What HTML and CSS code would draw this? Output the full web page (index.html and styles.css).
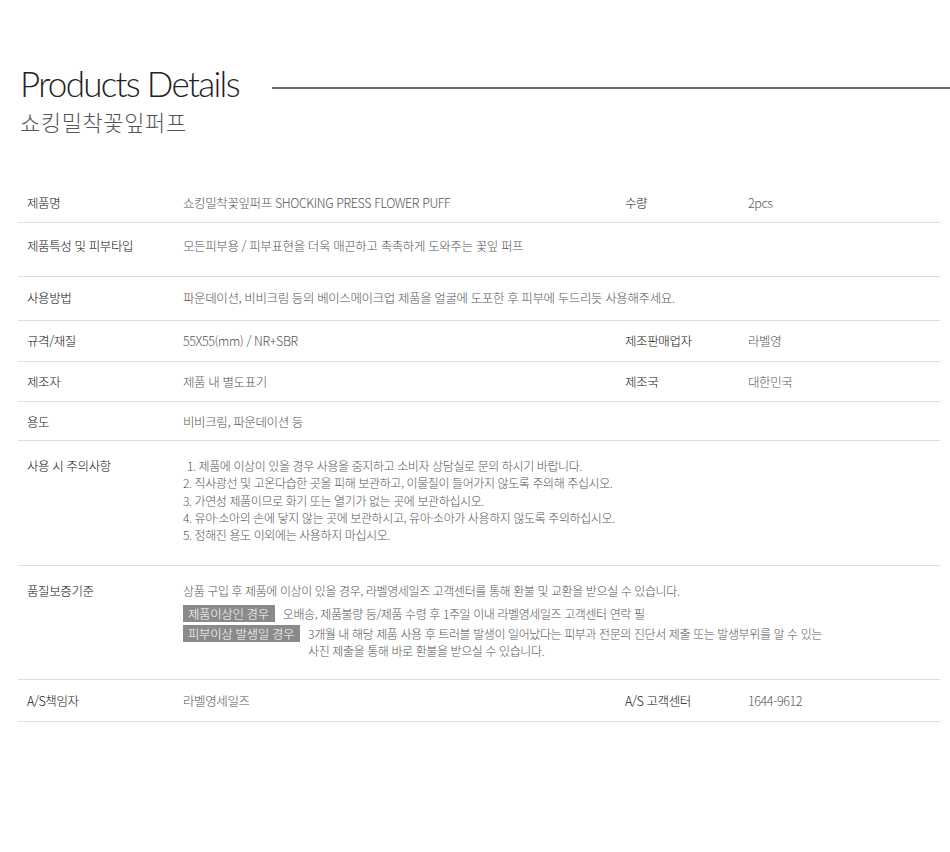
FILE: index.html
```html
<!DOCTYPE html>
<html lang="ko">
<head>
<meta charset="utf-8">
<link rel="stylesheet" href="styles.css">
</head>
<body>
<div class="page">
  <header class="head">
    <div class="head-top">
      <h1 class="title">Products Details</h1>
      <div class="rule"></div>
    </div>
    <p class="subtitle">쇼킹밀착꽃잎퍼프</p>
  </header>
  <table class="info">
    <colgroup>
      <col class="c1"><col class="c2"><col class="c3"><col class="c4">
    </colgroup>
    <tr class="r1">
      <th>제품명</th><td>쇼킹밀착꽃잎퍼프 SHOCKING PRESS FLOWER PUFF</td>
      <th>수량</th><td>2pcs</td>
    </tr>
    <tr class="r2">
      <th>제품특성 및 피부타입</th><td colspan="3">모든피부용 / 피부표현을 더욱 매끈하고 촉촉하게 도와주는 꽃잎 퍼프</td>
    </tr>
    <tr class="r3">
      <th>사용방법</th><td colspan="3">파운데이션, 비비크림 등의 베이스메이크업 제품을 얼굴에 도포한 후 피부에 두드리듯 사용해주세요.</td>
    </tr>
    <tr class="r4">
      <th>규격/재질</th><td>55X55(mm) / NR+SBR</td>
      <th>제조판매업자</th><td>라벨영</td>
    </tr>
    <tr class="r5">
      <th>제조자</th><td>제품 내 별도표기</td>
      <th>제조국</th><td>대한민국</td>
    </tr>
    <tr class="r6">
      <th>용도</th><td colspan="3">비비크림, 파운데이션 등</td>
    </tr>
    <tr class="r7">
      <th>사용 시 주의사항</th>
      <td colspan="3">
        <ol class="notes">
          <li class="first">1. 제품에 이상이 있을 경우 사용을 중지하고 소비자 상담실로 문의 하시기 바랍니다.</li>
          <li>2. 직사광선 및 고온다습한 곳을 피해 보관하고, 이물질이 들어가지 않도록 주의해 주십시오.</li>
          <li>3. 가연성 제품이므로 화기 또는 열기가 없는 곳에 보관하십시오.</li>
          <li>4. 유아·소아의 손에 닿지 않는 곳에 보관하시고, 유아·소아가 사용하지 않도록 주의하십시오.</li>
          <li>5. 정해진 용도 이외에는 사용하지 마십시오.</li>
        </ol>
      </td>
    </tr>
    <tr class="r8">
      <th>품질보증기준</th>
      <td colspan="3">
        <p class="qline">상품 구입 후 제품에 이상이 있을 경우, 라벨영세일즈 고객센터를 통해 환불 및 교환을 받으실 수 있습니다.</p>
        <div class="case">
          <span class="badge">제품이상인 경우</span>
          <span class="case-text">오배송, 제품불량 등/제품 수령 후 1주일 이내 라벨영세일즈 고객센터 연락 필</span>
        </div>
        <div class="case">
          <span class="badge">피부이상 발생일 경우</span>
          <span class="case-text">3개월 내 해당 제품 사용 후 트러블 발생이 일어났다는 피부과 전문의 진단서 제출 또는 발생부위를 알 수 있는<br>사진 제출을 통해 바로 환불을 받으실 수 있습니다.</span>
        </div>
      </td>
    </tr>
    <tr class="r9">
      <th>A/S책임자</th><td>라벨영세일즈</td>
      <th>A/S 고객센터</th><td>1644-9612</td>
    </tr>
  </table>
</div>
</body>
</html>
```
FILE: styles.css
```css
html, body {
  margin: 0;
  padding: 0;
  background: #fff;
}
body {
  font-family: "Noto Sans CJK KR", "Noto Sans", sans-serif;
  color: #333;
}
.page {
  padding: 63px 0 0 18px;
}
.head-top {
  display: flex;
  align-items: center;
}
.title {
  margin: 0 0 0 2px;
  font-family: "Lato", "Open Sans", sans-serif;
  font-weight: 300;
  font-size: 35px;
  line-height: 40px;
  letter-spacing: -1.7px;
  color: #222;
}
.rule {
  flex: 1;
  height: 2px;
  background: #6e6e6e;
  margin-left: 33px;
  margin-top: 10px;
}
.subtitle {
  margin: 3px 0 0 2px;
  font-size: 22px;
  line-height: 30px;
  letter-spacing: 0.6px;
  font-weight: 300;
  color: #555;
}
.info {
  margin-top: 48px;
  width: 922px;
  border-collapse: collapse;
  table-layout: fixed;
  font-size: 12.5px;
  letter-spacing: -0.4px;
}
.c1 { width: 156px; }
.c2 { width: 442px; }
.c3 { width: 123px; }
.c4 { width: 201px; }
.info th, .info td {
  text-align: left;
  vertical-align: top;
  padding: 11px 9px 0;
  line-height: 18px;
  border-bottom: 1px solid #dedede;
  font-weight: 300;
}
.info th { color: #111; }
.info td { color: #555; }
.r1 th, .r1 td { height: 28px; padding-top: 10px; }
.r2 th, .r2 td { height: 39px; padding-top: 14px; }
.r3 th, .r3 td { height: 31px; padding-top: 12px; }
.r4 th, .r4 td { height: 29px; }
.r5 th, .r5 td { height: 28px; }
.r6 th, .r6 td { height: 27px; }
.r7 th, .r7 td { height: 108px; padding-top: 16px; }
.r8 th, .r8 td { height: 97px; padding-top: 16px; }
.r9 th, .r9 td { height: 29px; padding-top: 12px; }
.notes {
  list-style: none;
  margin: 0;
  padding: 0;
  font-size: 12px;
  line-height: 17.3px;
}
.notes .first { padding-left: 4px; }
.qline { margin: 0 0 5px; font-size: 12px; }
.case {
  display: flex;
  align-items: flex-start;
  margin-bottom: 3px;
}
.badge {
  background: #8a8a8a;
  color: #fff;
  padding: 0 6px 0 5px;
  line-height: 17px;
  margin-right: 8px;
  white-space: nowrap;
}
.case-text { line-height: 17px; font-size: 12px; }
```
